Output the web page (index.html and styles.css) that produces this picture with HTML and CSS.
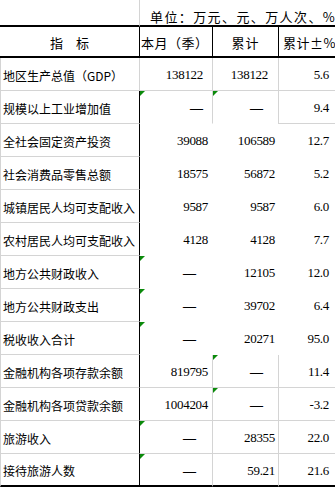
FILE: index.html
```html
<!DOCTYPE html>
<html lang="zh-CN">
<head>
<meta charset="utf-8">
<title>指标</title>
<link rel="stylesheet" href="styles.css">
</head>
<body>
<div class="sheet">
  <div class="cell top-blank"></div>
  <div class="cell top-unit">单位：万元、元、万人次、%</div>

  <div class="cell hd hd1">指　标</div>
  <div class="cell hd hd2">本月（季）</div>
  <div class="cell hd hd3">累计</div>
  <div class="cell hd hd4">累计±%</div>

  <div class="cell lab">地区生产总值（GDP）</div>
  <div class="cell num c2 g gb r1a">138122</div>
  <div class="cell num c3 g gb r1b">138122</div>
  <div class="cell num c4 g gb">5.6</div>

  <div class="cell lab">规模以上工业增加值</div>
  <div class="cell num c2 tri"><span class="dash d2a">—</span></div>
  <div class="cell num c3 g tri"><span class="dash d2b">—</span></div>
  <div class="cell num c4 g gb">9.4</div>

  <div class="cell lab">全社会固定资产投资</div>
  <div class="cell num c2">39088</div>
  <div class="cell num c3">106589</div>
  <div class="cell num c4">12.7</div>

  <div class="cell lab">社会消费品零售总额</div>
  <div class="cell num c2">18575</div>
  <div class="cell num c3">56872</div>
  <div class="cell num c4">5.2</div>

  <div class="cell lab">城镇居民人均可支配收入</div>
  <div class="cell num c2">9587</div>
  <div class="cell num c3">9587</div>
  <div class="cell num c4">6.0</div>

  <div class="cell lab">农村居民人均可支配收入</div>
  <div class="cell num c2">4128</div>
  <div class="cell num c3">4128</div>
  <div class="cell num c4">7.7</div>

  <div class="cell lab">地方公共财政收入</div>
  <div class="cell num c2 tri"><span class="dash">—</span></div>
  <div class="cell num c3">12105</div>
  <div class="cell num c4">12.0</div>

  <div class="cell lab">地方公共财政支出</div>
  <div class="cell num c2 tri"><span class="dash">—</span></div>
  <div class="cell num c3">39702</div>
  <div class="cell num c4">6.4</div>

  <div class="cell lab">税收收入合计</div>
  <div class="cell num c2 tri"><span class="dash">—</span></div>
  <div class="cell num c3">20271</div>
  <div class="cell num c4">95.0</div>

  <div class="cell lab">金融机构各项存款余额</div>
  <div class="cell num c2 gb">819795</div>
  <div class="cell num c3 g gb tri"><span class="dash">—</span></div>
  <div class="cell num c4 g gb">11.4</div>

  <div class="cell lab">金融机构各项贷款余额</div>
  <div class="cell num c2 gb">1004204</div>
  <div class="cell num c3 g gb tri"><span class="dash">—</span></div>
  <div class="cell num c4 g gb">-3.2</div>

  <div class="cell lab">旅游收入</div>
  <div class="cell num c2 gb tri"><span class="dash">—</span></div>
  <div class="cell num c3 g gb">28355</div>
  <div class="cell num c4 g gb">22.0</div>

  <div class="cell lab last">接待旅游人数</div>
  <div class="cell num c2 last tri"><span class="dash">—</span></div>
  <div class="cell num c3 g last">59.21</div>
  <div class="cell num c4 g last">21.6</div>
</div>
</body>
</html>
```

FILE: styles.css
```css
html, body {
  margin: 0;
  padding: 0;
  background: #ffffff;
}

.sheet {
  display: grid;
  grid-template-columns: 139px 73px 66px 57px;
  grid-template-rows: 27px 31px repeat(13, 33px);
  width: 335px;
  color: #000;
  font-family: "Noto Sans CJK SC", "Noto Sans", sans-serif;
}

.cell {
  box-sizing: border-box;
  position: relative;
  display: flex;
  align-items: center;
  overflow: hidden;
  white-space: nowrap;
  border-bottom: 1px solid transparent;
  border-left: 1px solid transparent;
}

/* top unit row */
.top-blank {
  border-bottom: 2px solid #000;
  border-left: none;
}
.top-unit {
  grid-column: 2 / 5;
  border-left: 1px solid #d4d4d4;
  border-bottom: 2px solid #000;
  align-items: flex-end;
  padding-left: 10px;
  padding-bottom: 1px;
  font-size: 13px;
  line-height: 14px;
  letter-spacing: 1.4px;
}

/* header row */
.hd {
  border-bottom: 2px solid #000;
  border-left: 1px solid #000;
  font-size: 13px;
  padding-top: 1px;
}
.hd1 {
  border-left: none;
  justify-content: center;
}
.hd2 {
  padding-left: 1px;
  letter-spacing: 0.5px;
}
.hd3 {
  justify-content: center;
  letter-spacing: 1px;
}
.hd4 {
  padding-left: 4px;
  letter-spacing: 0.5px;
}

/* label column */
.lab {
  border-left: 1px solid #d4d4d4;
  border-bottom: 1px solid #d4d4d4;
  padding-left: 2px;
  padding-top: 2px;
  font-size: 12px;
}

/* numeric columns */
.num {
  justify-content: flex-end;
  padding-top: 2px;
  font-family: "Liberation Serif", "Times New Roman", serif;
  font-size: 13px;
  letter-spacing: -0.3px;
}
.c2 {
  border-left: 1px solid #000;
  padding-right: 4px;
}
.c3 {
  padding-right: 3px;
}
.c4 {
  padding-right: 6px;
}
.g {
  border-left-color: #d4d4d4;
}
.gb {
  border-bottom-color: #d4d4d4;
}
.r1a {
  padding-right: 9px;
}
.r1b {
  padding-right: 10px;
}

.dash {
  margin-right: 12px;
  letter-spacing: 0;
  font-weight: 700;
}
.d2a {
  margin-right: 5px;
}
.d2b {
  margin-right: 12px;
}

.last {
  border-bottom: 2px solid #000;
}

/* Excel error indicator triangle */
.tri::before {
  content: "";
  position: absolute;
  top: 0;
  left: 0;
  width: 0;
  height: 0;
  border-top: 5px solid #0b8a0b;
  border-right: 5px solid transparent;
}
```
